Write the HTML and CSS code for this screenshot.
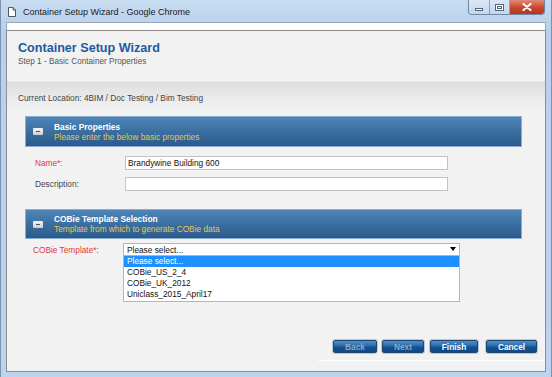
FILE: index.html
```html
<!DOCTYPE html>
<html>
<head>
<meta charset="utf-8">
<title>Container Setup Wizard</title>
<link rel="stylesheet" href="styles.css">
</head>
<body>
<div class="window">
  <div class="titlebar">
    <svg class="doc-icon" width="8" height="10" viewBox="0 0 8 10"><path d="M0.5 0.5 H5 L7.5 3 V9.5 H0.5 Z" fill="#fff" stroke="#555" stroke-width="1"/><path d="M5 0.5 V3 H7.5" fill="none" stroke="#555" stroke-width="1"/></svg>
    <span class="win-title">Container Setup Wizard - Google Chrome</span>
    <div class="controls">
      <div class="ctl ctl-min"><span class="min-bar"></span></div>
      <div class="ctl ctl-max"><span class="max-box"></span></div>
      <div class="ctl ctl-close"><svg width="10" height="8" viewBox="0 0 10 8"><path d="M1.5 1 L8.5 7 M8.5 1 L1.5 7" stroke="#fff" stroke-width="2" stroke-linecap="round"/></svg></div>
    </div>
  </div>
  <div class="frame">
    <div class="addressbar"></div>
    <div class="content">
      <div class="wiz-head">
        <h1>Container Setup Wizard</h1>
        <div class="step">Step 1 - Basic Container Properties</div>
      </div>
      <div class="location">Current Location: 4BIM / Doc Testing / Bim Testing</div>

      <div class="panel">
        <div class="collapse"><span></span></div>
        <div class="panel-text">
          <div class="panel-title">Basic Properties</div>
          <div class="panel-sub">Please enter the below basic properties</div>
        </div>
      </div>
      <div class="row row-name">
        <label class="lbl req">Name*:</label>
        <div class="input">Brandywine Building 600</div>
      </div>
      <div class="row row-desc">
        <label class="lbl">Description:</label>
        <div class="input"></div>
      </div>

      <div class="panel panel-cobie">
        <div class="collapse"><span></span></div>
        <div class="panel-text">
          <div class="panel-title">COBie Template Selection</div>
          <div class="panel-sub">Template from which to generate COBie data</div>
        </div>
      </div>
      <div class="row row-cobie">
        <label class="lbl req">COBie Template*:</label>
        <div class="select-wrap">
          <div class="select"><span>Please select...</span><svg width="6" height="5" viewBox="0 0 6 5"><path d="M0 0 H6 L3 4 Z" fill="#000"/></svg></div>
          <ul class="options">
            <li class="sel">Please select...</li>
            <li>COBie_US_2_4</li>
            <li>COBie_UK_2012</li>
            <li>Uniclass_2015_April17</li>
          </ul>
        </div>
      </div>

      <div class="footer">
        <div class="buttons">
          <button class="btn btn-back" disabled>Back</button>
          <button class="btn btn-next" disabled>Next</button>
          <button class="btn btn-finish">Finish</button>
          <button class="btn btn-cancel">Cancel</button>
        </div>
        <div class="footer-line"></div>
      </div>
    </div>
  </div>
</div>
</body>
</html>
```

FILE: styles.css
```css
* { box-sizing: border-box; }
html, body { margin: 0; padding: 0; }
body {
  width: 552px;
  height: 377px;
  overflow: hidden;
  font-family: "Liberation Sans", Arial, sans-serif;
  background: #bcd3ec;
}
.window {
  width: 552px;
  height: 377px;
  display: flex;
  flex-direction: column;
  background: linear-gradient(to bottom, #c8dcf1 0%, #b7d0ec 30px, #bcd4ee 100%);
  border-left: 1px solid #7d93ad;
  border-right: 1px solid #7d93ad;
}
.titlebar {
  height: 22px;
  display: flex;
  align-items: center;
  padding-left: 7px;
  flex: none;
}
.doc-icon { margin-top: 1px; }
.win-title {
  margin-left: 7px;
  font-size: 9px;
  color: #1a1a1a;
  margin-top: 1px;
}
.controls {
  margin-left: auto;
  margin-right: 6px;
  align-self: flex-start;
  display: flex;
  height: 15px;
  border: 1px solid #6f85a0;
  border-top: none;
  border-radius: 0 0 4px 4px;
  overflow: hidden;
}
.ctl {
  height: 14px;
  display: flex;
  align-items: center;
  justify-content: center;
  background: linear-gradient(to bottom, #dbe7f5, #c3d6ec);
}
.ctl-min { width: 21px; border-right: 1px solid #8fa3bb; }
.ctl-max { width: 20px; border-right: 1px solid #8fa3bb; }
.ctl-close { width: 34px; background: linear-gradient(to bottom, #e08a77, #c8452f 55%, #b8351f); }
.min-bar { width: 8px; height: 3px; background: #fff; border: 1px solid #55667c; margin-top: 4px; }
.max-box { width: 9px; height: 7px; border: 1px solid #55667c; background: #fff; box-shadow: inset 0 0 0 1px #fff, inset 0 0 0 2px #55667c; }

.frame {
  flex: 1;
  display: flex;
  flex-direction: column;
  padding: 0 5px 5px 5px;
}
.addressbar {
  height: 9px;
  flex: none;
  background: #fff;
  border: 1px solid #9aa6b3;
  border-bottom: 1px solid #8a8a8a;
}
.content {
  flex: 1;
  display: flex;
  flex-direction: column;
  background: #f2f2f2;
  border-left: 1px solid #8d8d8d;
  border-right: 1px solid #8d8d8d;
  border-bottom: 1px solid #8d8d8d;
  position: relative;
}
.wiz-head {
  height: 50px;
  padding: 10px 0 0 11px;
  flex: none;
}
.wiz-head h1 {
  margin: 0;
  font-size: 12.6px;
  line-height: 15px;
  font-weight: bold;
  color: #1d5b9c;
}
.step {
  font-size: 8.2px;
  line-height: 10px;
  color: #555;
  margin-top: 1px;
}
.location {
  height: 29px;
  flex: none;
  padding: 11px 0 0 11px;
  font-size: 8.3px;
  line-height: 10px;
  color: #444;
  border-top: 1px solid #e9e9e9;
  background: linear-gradient(to bottom, #dedede 0%, #ebebeb 60%, #f2f2f2 100%);
}
.panel {
  flex: none;
  margin: 6px 23px 0 18px;
  height: 31px;
  display: flex;
  align-items: center;
  background: linear-gradient(to bottom, #4f84b6 0%, #3b6fa1 50%, #2b5a8a 100%);
  border: 1px solid #8aaed2;
}
.panel-cobie { margin-top: 18px; height: 30px; }
.collapse {
  width: 10px;
  height: 7px;
  margin: 0 11px 0 7px;
  background: linear-gradient(to bottom, #f4f4f4, #cfcfcf);
  border-radius: 1px;
  display: flex;
  align-items: center;
  justify-content: center;
}
.collapse span { width: 4px; height: 1px; background: #555; }
.panel-text { display: flex; flex-direction: column; }
.panel-title {
  font-size: 8.4px;
  line-height: 10px;
  font-weight: bold;
  color: #fff;
}
.panel-sub {
  font-size: 8.3px;
  line-height: 10px;
  color: #e6c94a;
}
.row {
  flex: none;
  display: flex;
  align-items: center;
}
.row-name { margin-top: 9px; }
.row-desc { margin-top: 7px; }
.row-cobie { margin-top: 4px; }
.lbl {
  width: 90px;
  margin-left: 28px;
  font-size: 8.3px;
  color: #444;
}
.lbl.req { color: #e03a3a; }
.row-cobie .lbl { margin-left: 26px; }
.input {
  width: 323px;
  height: 14px;
  background: #fff;
  border: 1px solid #c2c2c2;
  font-size: 8.3px;
  line-height: 12px;
  padding-left: 2px;
  color: #111;
}
.select-wrap { position: relative; }
.select {
  width: 337px;
  height: 13px;
  background: #fff;
  border: 1px solid #9fb9e3;
  display: flex;
  align-items: center;
  justify-content: space-between;
  padding: 0 3px 0 3px;
  font-size: 8.3px;
  color: #111;
}
.options {
  position: absolute;
  top: 13px;
  left: 0;
  width: 337px;
  margin: 0;
  padding: 0 0 1px 0;
  list-style: none;
  background: #fff;
  border: 1px solid #9fb9e3;
  border-top: none;
  font-size: 8.3px;
}
.options li {
  height: 11px;
  line-height: 11px;
  padding-left: 3px;
  color: #111;
}
.options li.sel { background: #1e90ff; color: #fff; }

.footer {
  margin-top: auto;
  flex: none;
  display: flex;
  flex-direction: column;
  align-items: flex-end;
  padding-bottom: 10px;
}
.buttons {
  display: flex;
  gap: 5px;
  margin-right: 8px;
}
.btn {
  height: 13px;
  padding: 0;
  font-family: "Liberation Sans", Arial, sans-serif;
  font-size: 8.3px;
  font-weight: bold;
  color: #fff;
  border: 1px solid #1d4670;
  border-radius: 2px;
  background: linear-gradient(to bottom, #4f8ccb 0%, #2a6aab 45%, #11508f 55%, #0f4a86 100%);
  box-shadow: 0 0 0 1px #b8c8d8;
}
.btn[disabled] { color: #8faac4; }
.btn-back { width: 44px; }
.btn-next { width: 42px; }
.btn-finish { width: 48px; margin-left: 1px; }
.btn-cancel { width: 51px; margin-left: 3px; }
.footer-line {
  margin-top: 7px;
  width: 227px;
  height: 1px;
  background: #ffffff;
}
```
